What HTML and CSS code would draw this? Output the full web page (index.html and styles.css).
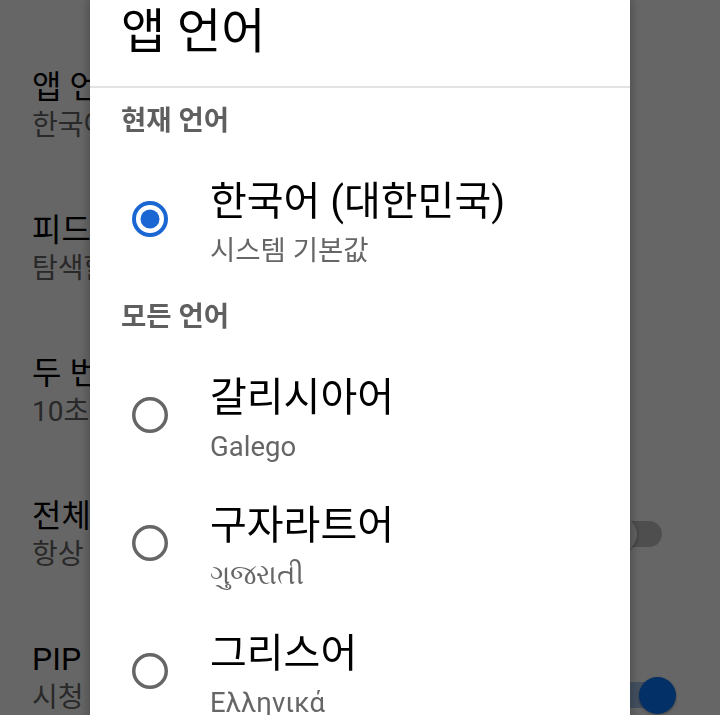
FILE: index.html
```html
<!DOCTYPE html>
<html lang="ko">
<head>
<meta charset="utf-8">
<title>앱 언어</title>
<link rel="stylesheet" href="styles.css">
</head>
<body>
<main class="settings">
  <div class="setting">
    <div class="setting-text">
      <div class="setting-title">앱 언어</div>
      <div class="setting-sub">한국어</div>
    </div>
  </div>
  <div class="setting">
    <div class="setting-text">
      <div class="setting-title">피드에서 음소거 재생</div>
      <div class="setting-sub">탐색할 때 음소거 재생</div>
    </div>
  </div>
  <div class="setting">
    <div class="setting-text">
      <div class="setting-title">두 번 탭하여 탐색</div>
      <div class="setting-sub">10초</div>
    </div>
  </div>
  <div class="setting">
    <div class="setting-text">
      <div class="setting-title">전체 화면으로 확대</div>
      <div class="setting-sub">항상 전체 화면으로 확대</div>
    </div>
    <div class="switch">
      <span class="switch-track"></span>
      <span class="switch-thumb"></span>
    </div>
  </div>
  <div class="setting">
    <div class="setting-text">
      <div class="setting-title">PIP 모드</div>
      <div class="setting-sub">시청 중에 앱을 나가면 PIP 모드에서 동영상을 계속 재생</div>
    </div>
    <div class="switch switch-on">
      <span class="switch-track"></span>
      <span class="switch-thumb"></span>
    </div>
  </div>
</main>

<div class="scrim">
  <div class="dialog" role="dialog" aria-label="앱 언어">
    <h2 class="dialog-title">앱 언어</h2>

    <section class="lang-section">
      <h3 class="section-title">현재 언어</h3>
      <div class="lang-row">
        <svg class="radio" viewBox="0 0 36 36" aria-hidden="true">
          <circle cx="18" cy="18" r="16" fill="none" stroke="#1a66d2" stroke-width="4"/>
          <circle cx="18" cy="18" r="9.5" fill="#1a66d2"/>
        </svg>
        <div class="lang-text">
          <div class="lang-name">한국어 (대한민국)</div>
          <div class="lang-sub">시스템 기본값</div>
        </div>
      </div>
    </section>

    <section class="lang-section">
      <h3 class="section-title">모든 언어</h3>
      <div class="lang-row">
        <svg class="radio" viewBox="0 0 36 36" aria-hidden="true">
          <circle cx="18" cy="18" r="16.25" fill="none" stroke="#666" stroke-width="3.5"/>
        </svg>
        <div class="lang-text">
          <div class="lang-name">갈리시아어</div>
          <div class="lang-sub">Galego</div>
        </div>
      </div>
      <div class="lang-row">
        <svg class="radio" viewBox="0 0 36 36" aria-hidden="true">
          <circle cx="18" cy="18" r="16.25" fill="none" stroke="#666" stroke-width="3.5"/>
        </svg>
        <div class="lang-text">
          <div class="lang-name">구자라트어</div>
          <div class="lang-sub">ગુજરાતી</div>
        </div>
      </div>
      <div class="lang-row">
        <svg class="radio" viewBox="0 0 36 36" aria-hidden="true">
          <circle cx="18" cy="18" r="16.25" fill="none" stroke="#666" stroke-width="3.5"/>
        </svg>
        <div class="lang-text">
          <div class="lang-name">그리스어</div>
          <div class="lang-sub">Ελληνικά</div>
        </div>
      </div>
    </section>
  </div>
</div>
</body>
</html>
```

FILE: styles.css
```css
* {
  box-sizing: border-box;
}

html, body {
  margin: 0;
  padding: 0;
  width: 720px;
  height: 715px;
  overflow: hidden;
  background: #ffffff;
  font-family: Roboto, "Noto Sans CJK KR", sans-serif;
}

/* Background settings page */
.settings {
  padding-top: 34px;
}

.setting {
  display: flex;
  align-items: center;
  padding: 33px 44px 33px 32px;
}

.setting-text {
  flex: 1;
  min-width: 0;
}

.setting-title {
  font-size: 32px;
  line-height: 41px;
  color: #000;
}

.setting-sub {
  font-size: 28px;
  line-height: 36px;
  color: #666;
}

.switch {
  position: relative;
  flex: none;
  width: 76px;
  height: 37px;
  margin-left: 24px;
}

.switch-track {
  position: absolute;
  left: 0;
  top: 5px;
  width: 62px;
  height: 26px;
  border-radius: 13px;
  background: #c4c4c4;
}

.switch-thumb {
  position: absolute;
  left: 0;
  top: 0;
  width: 37px;
  height: 37px;
  border-radius: 50%;
  background: #f4f4f4;
  box-shadow: 0 1px 3px rgba(0, 0, 0, 0.35);
}

.switch-on .switch-track {
  background: #a8c8f0;
}

.switch-on .switch-thumb {
  left: 39px;
  background: #0878ff;
}

/* Scrim + dialog */
.scrim {
  position: fixed;
  inset: 0;
  background: rgba(0, 0, 0, 0.6);
  display: flex;
  justify-content: center;
  align-items: flex-start;
  overflow: hidden;
}

.dialog {
  width: 540px;
  min-height: 760px;
  background: #ffffff;
  box-shadow: 0 0 10px 2px rgba(0, 0, 0, 0.25);
}

.dialog-title {
  margin: 0;
  padding: 2px 31px 24px;
  font-size: 48px;
  line-height: 60px;
  font-weight: 400;
  color: #000;
  border-bottom: 2px solid #e3e3e3;
}

.section-title {
  margin: 0;
  padding: 15px 31px 17px;
  font-size: 27.5px;
  line-height: 36px;
  font-weight: 700;
  color: #5f5f5f;
}

.lang-row {
  display: flex;
  align-items: center;
  gap: 42px;
  padding: 21px 0 16px 42px;
}

.radio {
  flex: none;
  width: 36px;
  height: 36px;
  margin-bottom: 8px;
}

.lang-name {
  font-size: 40px;
  line-height: 50px;
  color: #000;
}

.lang-sub {
  margin-top: 7px;
  font-size: 27.5px;
  line-height: 34px;
  color: #666;
}
```
